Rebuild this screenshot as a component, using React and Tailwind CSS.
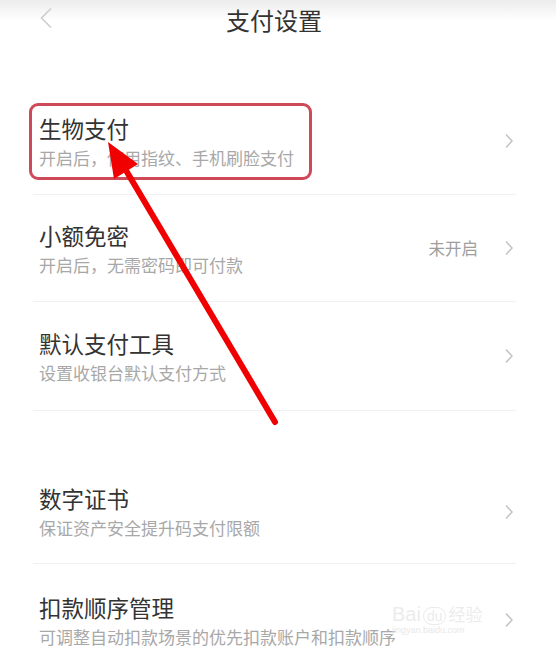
import React from 'react'

const rows = [
  { title: '生物支付', sub: '开启后，使用指纹、手机刷脸支付', h: 'h-[107px]', boxed: true },
  { title: '小额免密', sub: '开启后，无需密码即可付款', h: 'h-[107px]', status: '未开启' },
  { title: '默认支付工具', sub: '设置收银台默认支付方式', h: 'h-[109px]' },
]

const rows2 = [
  { title: '数字证书', sub: '保证资产安全提升码支付限额', h: 'h-[104px]' },
  { title: '扣款顺序管理', sub: '可调整自动扣款场景的优先扣款账户和扣款顺序', h: 'h-[112px]', last: true },
]

function Chevron() {
  return (
    <svg width="10" height="16" viewBox="0 0 10 16" className="shrink-0">
      <polyline points="2,1.5 8,8 2,14.5" fill="none" stroke="#c4c4c4" strokeWidth="1.5" />
    </svg>
  )
}

function Row({ item }) {
  return (
    <div className={`flex items-center justify-between ${item.h} ${item.last ? '' : 'border-b border-[#f1f1f1]'}`}>
      <div
        className={
          item.boxed
            ? '-ml-[4px] flex h-[77px] w-[283px] flex-col justify-center rounded-[9px] border-[3px] border-[#cf4a59] pl-[7px]'
            : 'flex flex-col pl-[6px]'
        }
      >
        <div className="text-[22.5px] leading-[30px] text-[#333]">{item.title}</div>
        <div className="mt-[3px] text-[17px] leading-[24px] text-[#a8a8a8]">{item.sub}</div>
      </div>
      <div className="flex items-center pr-[2px]">
        {item.status && <span className="mr-[26px] text-[16.5px] text-[#9e9e9e]">{item.status}</span>}
        <Chevron />
      </div>
    </div>
  )
}

export default function App() {
  return (
    <div
      className="relative h-[657px] w-[556px] overflow-hidden bg-white"
      style={{ fontFamily: '"Noto Sans CJK SC", "Noto Sans", sans-serif' }}
    >
      {/* header */}
      <div className="relative flex h-[40px] items-center justify-center bg-gradient-to-b from-[#ececec] via-white to-white pr-[8px]">
        <svg width="14" height="22" viewBox="0 0 14 22" className="absolute left-[39px] top-[7px]">
          <polyline points="12,1.5 2.5,11 12,20.5" fill="none" stroke="#cdcdcd" strokeWidth="1.6" />
        </svg>
        <span className="text-[24px] leading-[40px] text-[#333]">支付设置</span>
      </div>

      <div className="ml-[33px] mr-[40px] mt-[48px]">
        {rows.map((r) => (
          <Row key={r.title} item={r} />
        ))}
        <div className="h-[49px]" />
        {rows2.map((r) => (
          <Row key={r.title} item={r} />
        ))}
      </div>

      {/* baidu watermark */}
      <div className="pointer-events-none absolute left-[392px] top-[603px] flex flex-col items-start">
        <div className="flex items-end gap-[2px] text-[20px] leading-[22px] text-[#ececec]" style={{ fontFamily: '"Liberation Sans", sans-serif' }}>
          <span>Bai</span>
          <span className="rounded-full border border-[#ebebeb] px-[3px] text-[14px] leading-[16px]">du</span>
          <span className="text-[17px]" style={{ fontFamily: '"Noto Sans CJK SC", sans-serif' }}>经验</span>
        </div>
        <div className="text-[9px] leading-[10px] text-[#e8e8e8]" style={{ fontFamily: '"Liberation Sans", sans-serif' }}>
          jingyan.baidu.com
        </div>
      </div>

      {/* red annotation arrow */}
      <svg className="pointer-events-none absolute left-0 top-0" width="556" height="657" viewBox="0 0 556 657">
        <line x1="275" y1="422" x2="124" y2="167" stroke="#f00000" strokeWidth="6" strokeLinecap="round" />
        <polygon points="108,142 138,164 114,179" fill="#f00000" />
      </svg>
    </div>
  )
}
